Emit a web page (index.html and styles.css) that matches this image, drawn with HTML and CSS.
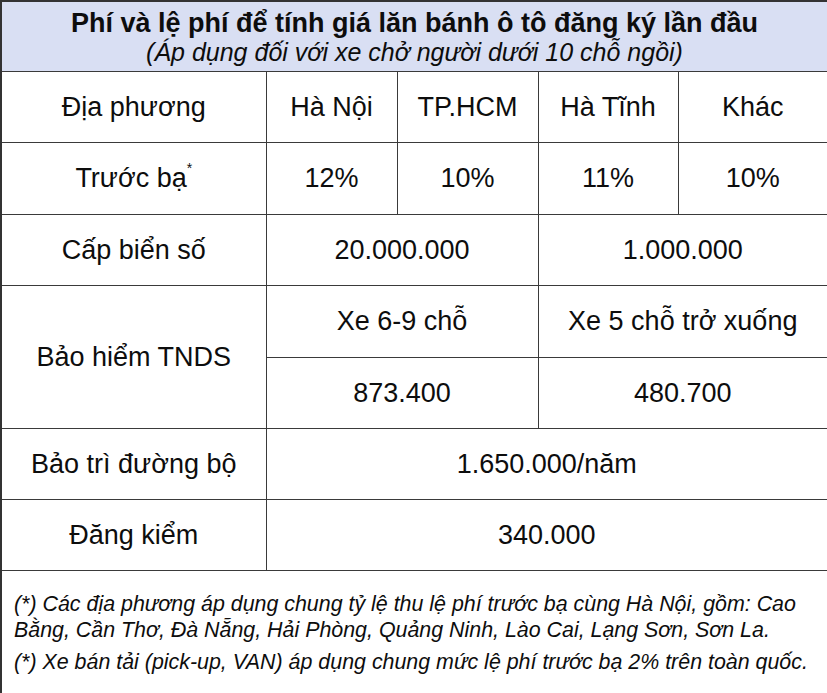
FILE: index.html
```html
<!DOCTYPE html>
<html lang="vi">
<head>
<meta charset="utf-8">
<title>Phí lăn bánh</title>
<link rel="stylesheet" href="styles.css">
</head>
<body>
<table class="fees">
  <colgroup>
    <col class="c1"><col class="c2"><col class="c3"><col class="c4"><col class="c5">
  </colgroup>
  <tr class="head">
    <td colspan="5">
      <div class="title">Phí và lệ phí để tính giá lăn bánh ô tô đăng ký lần đầu</div>
      <div class="subtitle">(Áp dụng đối với xe chở người dưới 10 chỗ ngồi)</div>
    </td>
  </tr>
  <tr>
    <td>Địa phương</td><td>Hà Nội</td><td>TP.HCM</td><td>Hà Tĩnh</td><td>Khác</td>
  </tr>
  <tr class="tall">
    <td>Trước bạ<sup>*</sup></td><td>12%</td><td>10%</td><td>11%</td><td>10%</td>
  </tr>
  <tr>
    <td>Cấp biển số</td><td colspan="2">20.000.000</td><td colspan="2">1.000.000</td>
  </tr>
  <tr class="tall">
    <td rowspan="2">Bảo hiểm TNDS</td><td colspan="2">Xe 6-9 chỗ</td><td colspan="2">Xe 5 chỗ trở xuống</td>
  </tr>
  <tr>
    <td colspan="2">873.400</td><td colspan="2">480.700</td>
  </tr>
  <tr>
    <td>Bảo trì đường bộ</td><td colspan="4">1.650.000/năm</td>
  </tr>
  <tr>
    <td>Đăng kiểm</td><td colspan="4">340.000</td>
  </tr>
  <tr class="foot">
    <td colspan="5">
      <p>(*) Các địa phương áp dụng chung tỷ lệ thu lệ phí trước bạ cùng Hà Nội, gồm: Cao Bằng, Cần Thơ, Đà Nẵng, Hải Phòng, Quảng Ninh, Lào Cai, Lạng Sơn, Sơn La.</p>
      <p>(*) Xe bán tải (pick-up, VAN) áp dụng chung mức lệ phí trước bạ 2% trên toàn quốc.</p>
    </td>
  </tr>
</table>
</body>
</html>
```
FILE: styles.css
```css
html, body {
  margin: 0;
  padding: 0;
  background: #ffffff;
}
.fees {
  border-collapse: collapse;
  table-layout: fixed;
  width: 827px;
  font-family: "Liberation Sans", Arial, sans-serif;
  color: #0d0d0d;
  border: 2px solid #333;
}
.c1 { width: 265px; }
.c2 { width: 131px; }
.c3 { width: 141px; }
.c4 { width: 140px; }
.c5 { width: 150px; }
.fees td {
  border: 1px solid #3a3a3a;
  text-align: center;
  vertical-align: middle;
  font-size: 27px;
  height: 70px;
  padding: 0;
  line-height: 1;
}
.fees .tall td {
  height: 71px;
}
.fees .tall td[rowspan] {
  height: auto;
}
.fees sup {
  font-size: 14px;
  vertical-align: top;
  position: relative;
  top: -4px;
}
.head td {
  background: #d9dff3;
  height: 69px;
}
.title {
  font-weight: bold;
  font-size: 27px;
  line-height: 30px;
}
.subtitle {
  font-style: italic;
  font-size: 25px;
  line-height: 28px;
}
.foot td {
  height: 116px;
  text-align: left;
  padding: 20px 6px 12px 12px;
  font-style: italic;
  font-size: 21.4px;
  line-height: 26px;
  vertical-align: top;
}
.foot p {
  margin: 0 0 6px 0;
}
```
